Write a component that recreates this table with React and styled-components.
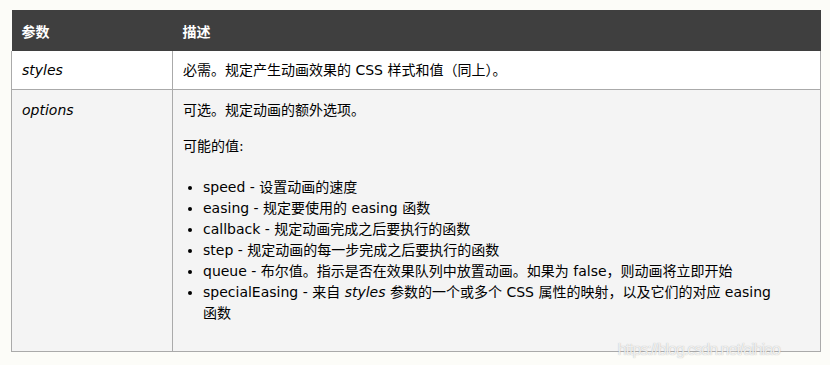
import styled, { createGlobalStyle } from "styled-components";

const GlobalStyle = createGlobalStyle`
  html, body {
    margin: 0;
    padding: 0;
    background: #fcfcf8;
  }
  body {
    font-family: "DejaVu Sans", Verdana, "Noto Sans CJK SC", sans-serif;
    font-size: 14px;
    color: #000;
  }
`;

const Page = styled.div`
  position: relative;
  width: 830px;
  height: 365px;
  padding: 10px 0 0 11px;
  box-sizing: border-box;
`;

const Table = styled.table`
  width: 810px;
  border-collapse: collapse;
  table-layout: fixed;

  tbody tr:first-child td {
    border-top: 0;
  }
`;

const HeadCell = styled.th`
  width: ${(p) => (p.$first ? "141px" : "auto")};
  height: 41px;
  padding: 0 10px;
  background: #3f3f3f;
  color: #fff;
  text-align: left;
  font-weight: bold;
  font-size: 14px;
  border: 0;
`;

const Row = styled.tr`
  background: ${(p) => (p.$alt ? "#f4f4f4" : "#fff")};
`;

const Cell = styled.td`
  padding: ${(p) => (p.$tall ? "10px 10px 8px" : "9px 10px 8px")};
  vertical-align: top;
  line-height: 21px;
  border: 1px solid #aaa;
  font-size: 14px;
  font-style: ${(p) => (p.$italic ? "italic" : "normal")};
`;

const Para = styled.p`
  margin: 0 0 15px;
`;

const List = styled.ul`
  margin: 20px 0 19px;
  padding-left: 20px;
`;

const Item = styled.li`
  line-height: 21px;
`;

const Em = styled.em`
  font-style: italic;
`;

const Watermark = styled.div`
  position: absolute;
  right: 50px;
  bottom: 6px;
  font-family: "Liberation Sans", Arial, sans-serif;
  font-size: 16px;
  letter-spacing: -1px;
  color: rgba(255, 255, 255, 0.8);
  text-shadow: 0 0 1px rgba(120, 120, 120, 0.6);
  pointer-events: none;
`;

const items = [
  ["speed", "设置动画的速度"],
  ["easing", "规定要使用的 easing 函数"],
  ["callback", "规定动画完成之后要执行的函数"],
  ["step", "规定动画的每一步完成之后要执行的函数"],
  ["queue", "布尔值。指示是否在效果队列中放置动画。如果为 false，则动画将立即开始"],
];

export default function App() {
  return (
    <Page>
      <GlobalStyle />
      <Table>
        <thead>
          <tr>
            <HeadCell $first>参数</HeadCell>
            <HeadCell>描述</HeadCell>
          </tr>
        </thead>
        <tbody>
          <Row>
            <Cell $italic>styles</Cell>
            <Cell>必需。规定产生动画效果的 CSS 样式和值（同上）。</Cell>
          </Row>
          <Row $alt>
            <Cell $italic $tall>
              options
            </Cell>
            <Cell $tall>
              <Para>可选。规定动画的额外选项。</Para>
              <Para>可能的值:</Para>
              <List>
                {items.map(([name, desc]) => (
                  <Item key={name}>
                    {name} - {desc}
                  </Item>
                ))}
                <Item>
                  specialEasing - 来自 <Em>styles</Em> 参数的一个或多个 CSS
                  属性的映射，以及它们的对应 easing
                  <br />
                  函数
                </Item>
              </List>
            </Cell>
          </Row>
        </tbody>
      </Table>
      <Watermark>https://blog.csdn.net/aihiao</Watermark>
    </Page>
  );
}
